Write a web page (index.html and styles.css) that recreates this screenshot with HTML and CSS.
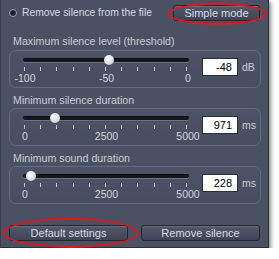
FILE: index.html
```html
<!DOCTYPE html>
<html lang="en">
<head>
    <meta charset="UTF-8">
    <title>Silence settings</title>
    <link rel="stylesheet" href="styles.css">
</head>
<body>
    <div class="panel">
        <div class="top-row">
            <label class="radio-option">
                <span class="radio"></span>
                Remove silence from the file
            </label>
            <button class="btn btn-mode">Simple mode</button>
            <span class="mark mark-mode"></span>
        </div>

        <p class="group-title">Maximum silence level (threshold)</p>
        <div class="group">
            <div class="slider">
                <div class="track">
                    <span class="thumb" style="left: 52%"></span>
                </div>
                <div class="ticks">
                    <i></i><i></i><i></i><i></i><i></i><i></i><i></i><i></i><i></i><i></i><i></i>
                </div>
                <div class="scale">
                    <span>-100</span><span>-50</span><span>0</span>
                </div>
            </div>
            <div class="value">-48</div>
            <span class="unit">dB</span>
        </div>

        <p class="group-title">Minimum silence duration</p>
        <div class="group">
            <div class="slider">
                <div class="track">
                    <span class="thumb" style="left: 19.4%"></span>
                </div>
                <div class="ticks">
                    <i></i><i></i><i></i><i></i><i></i><i></i><i></i><i></i><i></i><i></i><i></i>
                </div>
                <div class="scale">
                    <span>0</span><span>2500</span><span>5000</span>
                </div>
            </div>
            <div class="value">971</div>
            <span class="unit">ms</span>
        </div>

        <p class="group-title">Minimum sound duration</p>
        <div class="group">
            <div class="slider">
                <div class="track">
                    <span class="thumb" style="left: 4.6%"></span>
                </div>
                <div class="ticks">
                    <i></i><i></i><i></i><i></i><i></i><i></i><i></i><i></i><i></i><i></i><i></i>
                </div>
                <div class="scale">
                    <span>0</span><span>2500</span><span>5000</span>
                </div>
            </div>
            <div class="value">228</div>
            <span class="unit">ms</span>
        </div>

        <div class="actions">
            <button class="btn">Default settings</button>
            <button class="btn">Remove silence</button>
            <span class="mark mark-default"></span>
        </div>
    </div>
</body>
</html>
```

FILE: styles.css
```css
* {
    margin: 0;
    padding: 0;
    box-sizing: border-box;
}

body {
    background-color: #fff;
    font-family: "Liberation Sans", Arial, sans-serif;
    font-size: 10px;
    color: #cfd3dc;
}

.panel {
    position: relative;
    width: 269px;
    height: 248px;
    padding: 0 7px 0 8px;
    background-color: #4a5163;
    border-left: 1px solid #3b4150;
    border-right: 1px solid #2a2e37;
    border-bottom: 1px solid #2a2e37;
    box-shadow: 2px 2px 4px rgba(0, 0, 0, 0.45);
}

.top-row {
    position: relative;
    height: 25px;
    display: flex;
    align-items: center;
    justify-content: space-between;
}

.radio-option {
    display: flex;
    align-items: center;
    gap: 5px;
    font-size: 10.3px;
    color: #d6dae2;
}

.radio {
    width: 8px;
    height: 8px;
    border-radius: 50%;
    background-color: #1d2026;
    border: 1.5px solid #9ea4b0;
}

.btn {
    font-family: inherit;
    font-size: 11px;
    color: #d8dce4;
    height: 16px;
    border: 1px solid #23262e;
    border-radius: 3px;
    background: linear-gradient(#535a6c, #3e4454);
    box-shadow: inset 0 1px 0 rgba(255, 255, 255, 0.12);
}

.btn-mode {
    width: 87px;
    margin-right: 1px;
}

.group-title {
    margin-top: 9px;
    margin-bottom: 2px;
    padding-left: 4px;
    line-height: 14px;
    font-size: 10.7px;
    color: #c9cdd6;
}

.group + .group-title {
    margin-top: 5px;
    margin-bottom: 1px;
}

.group {
    height: 38px;
    display: flex;
    align-items: flex-start;
    padding: 7px 0 0 13px;
    border: 1px solid #646b7b;
    border-radius: 7px;
    background: linear-gradient(#4c5366, #474e60);
}

.slider {
    width: 166px;
}

.track {
    position: relative;
    height: 4px;
    border-radius: 2px;
    background-color: #15171b;
    border-top: 1px solid #0b0c0f;
    box-shadow: 0 1px 0 #6b7283;
}

.thumb {
    position: absolute;
    top: -4px;
    width: 10px;
    height: 10px;
    margin-left: -5px;
    border-radius: 50%;
    background: radial-gradient(circle at 40% 35%, #ffffff, #d4d8de 65%, #a4aab4);
}

.ticks {
    display: flex;
    justify-content: space-between;
    margin: 5px 2px 0 1px;
}

.ticks i {
    width: 1px;
    height: 4px;
    background-color: #c4c8d0;
}

.scale {
    display: flex;
    justify-content: space-between;
    margin: 1px -14px 0 -13px;
    line-height: 12px;
    font-size: 10.5px;
    color: #d2d6de;
}

.scale span {
    width: 30px;
    text-align: center;
}

.value {
    width: 36px;
    height: 18px;
    margin-left: 13px;
    padding-right: 5px;
    line-height: 16px;
    text-align: right;
    font-size: 11px;
    color: #000;
    background-color: #fff;
    border: 1px solid #2a2d34;
}

.unit {
    margin-left: 4px;
    line-height: 18px;
    font-size: 10.5px;
    color: #c9cdd6;
}

.actions {
    position: relative;
    display: flex;
    gap: 13px;
    margin-top: 21px;
    padding-right: 1px;
}

.actions .btn {
    flex: 1;
}

.mark {
    position: absolute;
    border: 2.5px solid #e8141c;
    border-radius: 50%;
}

.mark-mode {
    right: -6px;
    top: 3px;
    width: 99px;
    height: 22px;
}

.mark-default {
    left: -6px;
    top: -7px;
    width: 136px;
    height: 30px;
}
```
